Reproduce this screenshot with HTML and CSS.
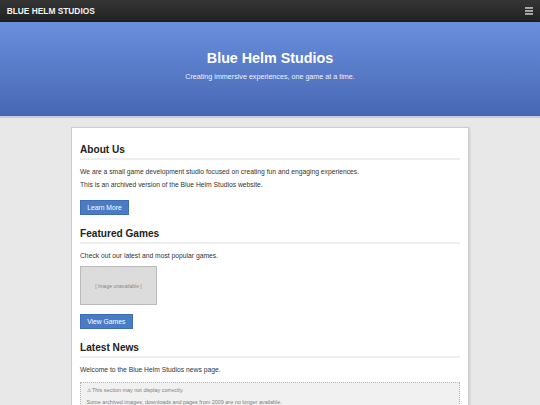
FILE: index.html
```html
<!DOCTYPE html>
<html lang="en">
<head>
<meta charset="utf-8">
<title>Blue Helm Studios</title>
<link rel="stylesheet" href="styles.css">
</head>
<body>
<header class="topbar">
  <div class="brand">BLUE HELM STUDIOS</div>
  <svg class="menu" width="8" height="8" viewBox="0 0 8 8" aria-hidden="true">
    <rect x="0" y="0.3" width="8" height="1.3" fill="#e6e6e6"/>
    <rect x="0" y="3.3" width="8" height="1.3" fill="#e6e6e6"/>
    <rect x="0" y="6.3" width="8" height="1.3" fill="#e6e6e6"/>
  </svg>
</header>
<section class="hero">
  <h1 class="hero-title">Blue Helm Studios</h1>
  <p class="hero-sub">Creating immersive experiences, one game at a time.</p>
</section>
<main class="card">
  <section class="block">
    <h2 class="heading">About Us</h2>
    <p class="text">We are a small game development studio focused on creating fun and engaging experiences.</p>
    <p class="text">This is an archived version of the Blue Helm Studios website.</p>
    <div class="actions actions-first"><a class="btn" href="#">Learn More</a></div>
  </section>
  <section class="block">
    <h2 class="heading">Featured Games</h2>
    <p class="text">Check out our latest and most popular games.</p>
    <div class="thumb">[ Image unavailable ]</div>
    <div class="actions actions-after-thumb"><a class="btn" href="#">View Games</a></div>
  </section>
  <section class="block">
    <h2 class="heading">Latest News</h2>
    <p class="text">Welcome to the Blue Helm Studios news page.</p>
    <div class="notice">
      <p class="notice-line">&#9888; This section may not display correctly.</p>
      <p class="notice-line">Some archived images, downloads and pages from 2009 are no longer available.</p>
    </div>
  </section>
</main>
</body>
</html>
```
FILE: styles.css
```css
* { box-sizing: border-box; }
html, body { margin: 0; padding: 0; }
body {
  background: #e8e8e8;
  font-family: "Liberation Sans", Arial, sans-serif;
  font-size: 6.75px;
  color: #333;
  overflow: hidden;
}
.topbar {
  height: 22px;
  display: flex;
  align-items: center;
  justify-content: space-between;
  padding: 0 6.7px;
  background: linear-gradient(#353535, #222);
  border-bottom: 1px solid #1a1a1a;
}
.brand {
  color: #f2f2f2;
  font-weight: bold;
  font-size: 8.35px;
}
.menu { display: block; }
.hero {
  height: 96px;
  padding-top: 28px;
  background: linear-gradient(#6a8fdc, #4767b4);
  border-bottom: 2px solid #c5cce0;
  text-align: center;
  color: #fff;
}
.hero-title {
  margin: 0;
  font-size: 14.3px;
  line-height: 16px;
  font-weight: bold;
}
.hero-sub {
  margin: 7px 0 0;
  font-size: 7.17px;
  line-height: 8px;
  color: #eef2fb;
}
.card {
  width: 398px;
  margin: 9px auto 0;
  background: #fff;
  border: 1px solid #ccc;
  box-shadow: 1px 1px 2px rgba(0,0,0,0.12);
  padding: 15.9px 8px 20px;
}
.block + .block { margin-top: 12.5px; }
.heading {
  margin: 0 0 6.8px;
  font-size: 10.125px;
  line-height: 12.15px;
  font-weight: bold;
  color: #222;
  padding-bottom: 1.8px;
  border-bottom: 2px solid #eee;
}
.text {
  margin: 0 0 4.3px;
  line-height: 9.45px;
}
.actions-first { margin-top: 10.5px; }
.thumb {
  margin-top: 6px;
  width: 77px;
  height: 39px;
  background: #dcdcdc;
  border: 1px solid #bbb;
  display: flex;
  align-items: center;
  justify-content: center;
  font-size: 5.06px;
  color: #888;
}
.actions-after-thumb { margin-top: 9.3px; }
.btn {
  display: inline-block;
  background: #4a7bc5;
  border: 1px solid #3f6db5;
  color: #fff;
  text-decoration: none;
  font-size: 6.75px;
  line-height: 9.45px;
  padding: 1.8px 6.2px;
}
.notice {
  margin-top: 7.5px;
  background: #f1f1f1;
  border: 1px dotted #b5b5b5;
  padding: 4px 5.6px;
}
.notice-line {
  margin: 0 0 4.3px;
  font-size: 5.45px;
  line-height: 7.7px;
  color: #808080;
}
```
